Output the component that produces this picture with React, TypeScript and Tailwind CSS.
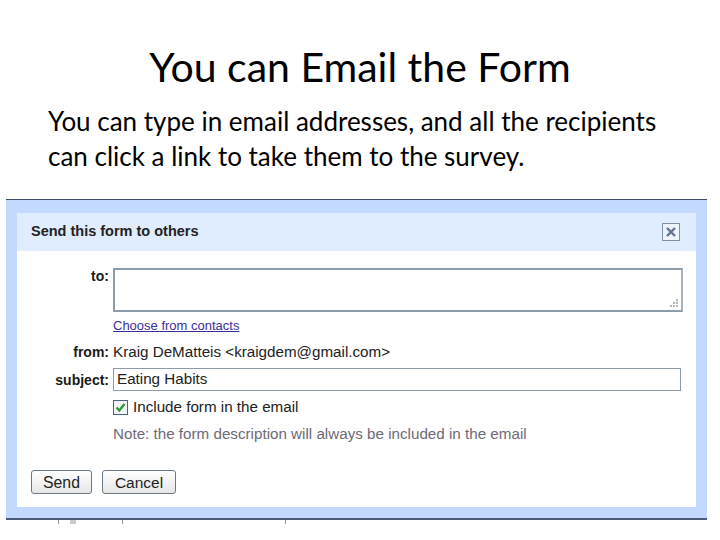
import React from "react";

const ui = { fontFamily: '"Liberation Sans", Arial, sans-serif' };
const slide = { fontFamily: 'Lato, "Open Sans", sans-serif' };

function Row({ label, children, className = "" }: { label?: string; children: React.ReactNode; className?: string }) {
  return (
    <div className={`flex ${className}`}>
      <div className="w-[96px] shrink-0 pr-[4px] text-right text-[14px] font-bold leading-[16px] text-[#1a1a1a]">{label}</div>
      <div className="flex flex-1 items-center">{children}</div>
    </div>
  );
}

export default function App() {
  return (
    <div className="flex h-[540px] w-[720px] flex-col overflow-hidden bg-white" style={slide}>
      <h1 className="pt-[42px] text-center text-[41px] leading-[50px] text-black">You can Email the Form</h1>
      <p className="ml-[48px] mt-[12px] text-[26px] leading-[35px] text-black">
        You can type in email addresses, and all the recipients
        <br />
        can click a link to take them to the survey.
      </p>

      <div className="ml-[6px] mt-[25px] w-[701px]" style={ui}>
        <div className="h-px bg-[#3e4d6a]" />
        <div className="border-x-[11px] border-t-[13px] border-b-[11px] border-[#c3d9ff]">
          <div className="flex h-[38px] items-center justify-between bg-[#e0ecff] pl-[14px] pr-[16px]">
            <span className="text-[14.5px] font-bold text-[#222]">Send this form to others</span>
            <span className="flex h-[18px] w-[18px] items-center justify-center border border-[#7f90a8] bg-[#eef3fb]">
              <svg width="12" height="12" viewBox="0 0 12 12">
                <path d="M2 2 L10 10 M10 2 L2 10" stroke="#5f7390" strokeWidth="2.4" />
              </svg>
            </span>
          </div>
          <div className="bg-white pt-[17px] pb-[13px]">
            <Row label="to:">
              <div className="relative h-[44px] w-[570px] border-2 border-[#8d9cab] border-r-[#a7b3bf]">
                <svg className="absolute bottom-[2px] right-[2px]" width="10" height="10" viewBox="0 0 10 10">
                  <rect x="7" y="1" width="2" height="2" fill="#b0b8c0" />
                  <rect x="4" y="4" width="2" height="2" fill="#b0b8c0" />
                  <rect x="7" y="4" width="2" height="2" fill="#b0b8c0" />
                  <rect x="1" y="7" width="2" height="2" fill="#b0b8c0" />
                  <rect x="4" y="7" width="2" height="2" fill="#b0b8c0" />
                  <rect x="7" y="7" width="2" height="2" fill="#b0b8c0" />
                </svg>
              </div>
            </Row>
            <Row className="mt-[4px] h-[20px]">
              <span className="text-[13px] leading-[16px] text-[#3b2f9a] underline">Choose from contacts</span>
            </Row>
            <Row label="from:" className="mt-[6px] h-[20px] items-center">
              <span className="text-[15.2px] leading-[18px] text-[#222]">Kraig DeMatteis &lt;kraigdem@gmail.com&gt;</span>
            </Row>
            <Row label="subject:" className="mt-[6px] items-center">
              <div className="flex h-[23px] w-[568px] items-center border border-[#8d9cab] px-[3px] text-[15.2px] text-[#222]">
                Eating Habits
              </div>
            </Row>
            <Row className="mt-[7px] h-[18px]">
              <div className="flex items-center gap-[5px]">
                <span className="flex h-[15px] w-[15px] items-center justify-center border border-[#4d6478] bg-[#f1f4f7]">
                  <svg width="11" height="11" viewBox="0 0 11 11">
                    <path d="M1.5 5.5 L4.3 8.5 L9.5 2" fill="none" stroke="#2f9a2f" strokeWidth="2.4" />
                  </svg>
                </span>
                <span className="text-[15.2px] leading-[18px] text-[#222]">Include form in the email</span>
              </div>
            </Row>
            <Row className="mt-[8px] h-[20px]">
              <span className="text-[15.2px] leading-[18px] text-[#6e6a78]">
                Note: the form description will always be included in the email
              </span>
            </Row>
            <div className="mt-[26px] flex gap-[10px] pl-[14px]">
              <button className="h-[24px] w-[61px] rounded-[3px] border border-[#6b7888] bg-gradient-to-b from-white to-[#e6e6e6] text-[15.8px] text-[#222]">
                Send
              </button>
              <button className="h-[24px] w-[74px] rounded-[3px] border border-[#6b7888] bg-gradient-to-b from-white to-[#e6e6e6] text-[15.5px] text-[#222]">
                Cancel
              </button>
            </div>
          </div>
        </div>
        <div className="h-[2px] bg-[#4a5a78]" />
        <div className="relative h-[4px]">
          <span className="absolute left-[52px] top-0 h-[4px] w-px bg-[#999]" />
          <span className="absolute left-[64px] top-0 h-[4px] w-[6px] bg-[#ccc]" />
          <span className="absolute left-[116px] top-0 h-[4px] w-px bg-[#999]" />
          <span className="absolute left-[279px] top-0 h-[4px] w-px bg-[#999]" />
        </div>
      </div>
    </div>
  );
}
